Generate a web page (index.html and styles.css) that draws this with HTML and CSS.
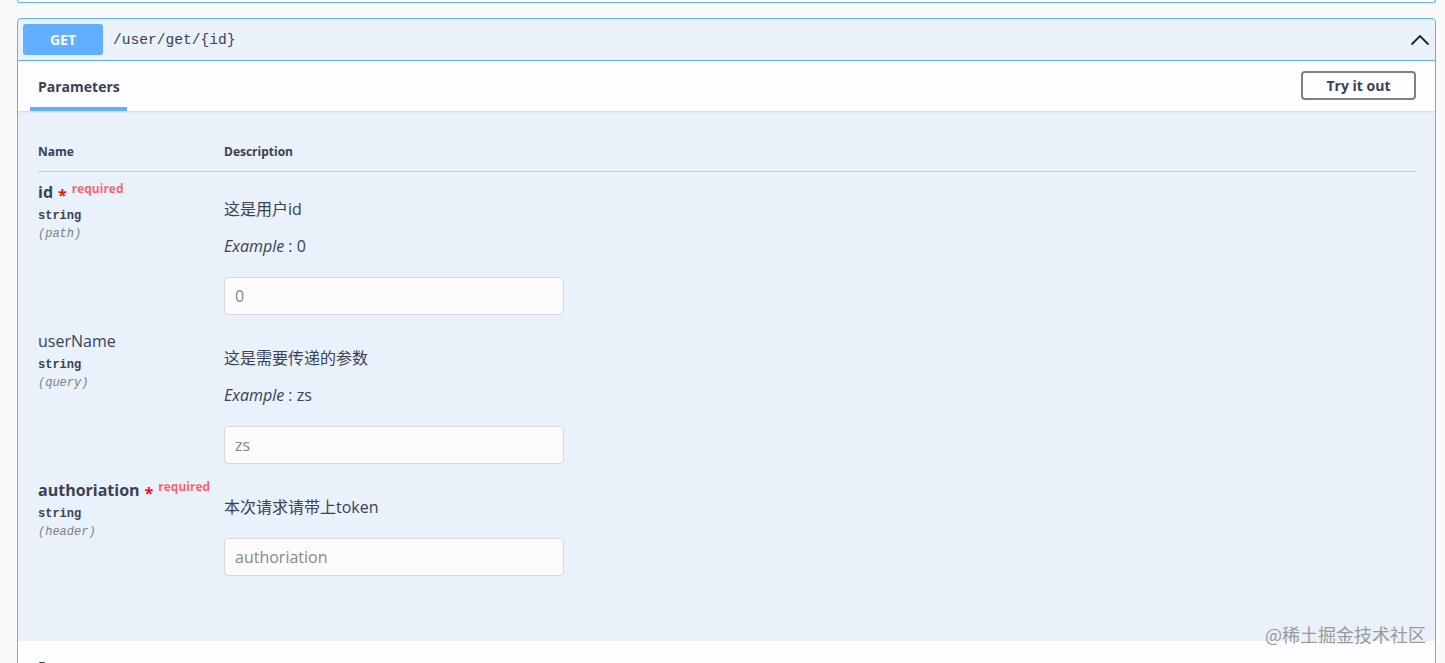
FILE: index.html
```html
<!DOCTYPE html>
<html lang="zh">
<head>
<meta charset="utf-8">
<title>Swagger</title>
<link rel="stylesheet" href="styles.css">
</head>
<body>
<div class="prev-block"></div>
<div class="opblock">
  <div class="summary">
    <span class="method">GET</span>
    <span class="path">/user/get/{id}</span>
    <svg class="chev" width="20" height="20" viewBox="0 0 20 20"><path d="M1.5 14.5 L10 6 L18.5 14.5" fill="none" stroke="#222" stroke-width="1.8"/></svg>
  </div>
  <div class="section-header">
    <div class="tab"><h4>Parameters</h4></div>
    <button class="try">Try it out</button>
  </div>
  <div class="params">
    <div class="thead"><div class="col-name">Name</div><div>Description</div></div>
    <div class="row">
      <div class="col-name">
        <div class="pname bold">id<span class="star">*</span><span class="req">required</span></div>
        <div class="ptype">string</div>
        <div class="pin">(path)</div>
      </div>
      <div class="col-desc">
        <p class="desc">这是用户id</p>
        <p class="example"><i>Example</i> : 0</p>
        <input class="field" type="text" placeholder="0">
      </div>
    </div>
    <div class="row">
      <div class="col-name">
        <div class="pname">userName</div>
        <div class="ptype">string</div>
        <div class="pin">(query)</div>
      </div>
      <div class="col-desc">
        <p class="desc">这是需要传递的参数</p>
        <p class="example"><i>Example</i> : zs</p>
        <input class="field" type="text" placeholder="zs">
      </div>
    </div>
    <div class="row">
      <div class="col-name">
        <div class="pname bold">authoriation<span class="star">*</span><span class="req">required</span></div>
        <div class="ptype">string</div>
        <div class="pin">(header)</div>
      </div>
      <div class="col-desc">
        <p class="desc last">本次请求请带上token</p>
        <input class="field" type="text" placeholder="authoriation">
      </div>
    </div>
  </div>
  <div class="responses"><h4>Responses</h4></div>
</div>
<div class="watermark">@稀土掘金技术社区</div>
</body>
</html>
```

FILE: styles.css
```css
* { box-sizing: border-box; }
html, body { margin: 0; padding: 0; }
body {
  background: #fafafa;
  font-family: "Open Sans", "Noto Sans CJK SC", sans-serif;
  color: #3b4151;
  position: relative;
  height: 663px;
  overflow: hidden;
}
.prev-block {
  height: 3px;
  margin: 0 9px 0 17px;
  border: 1px solid #61affe;
  border-top: none;
  border-radius: 0 0 4px 4px;
  background: #fff;
}
.opblock {
  margin: 15px 9px 0 17px;
  border: 1px solid #61affe;
  border-radius: 4px;
  background: rgba(97, 175, 254, 0.11);
}
.summary {
  display: flex;
  align-items: center;
  padding: 5px;
  border-bottom: 1px solid #61affe;
}
.method {
  width: 80px;
  height: 31px;
  border-radius: 3px;
  background: #61affe;
  color: #fff;
  font-weight: 700;
  font-size: 14px;
  display: flex;
  align-items: center;
  justify-content: center;
}
.path {
  margin-left: 10px;
  font-family: "Liberation Mono", monospace;
  font-size: 14.6px;
  color: #3b4151;
  flex: 1;
}
.section-header {
  display: flex;
  align-items: center;
  justify-content: space-between;
  min-height: 50px;
  padding: 0 19px 0 12px;
  background: rgba(255, 255, 255, 0.85);
  box-shadow: 0 1px 2px rgba(0, 0, 0, 0.1);
}
.tab {
  align-self: stretch;
  display: flex;
  align-items: center;
  padding: 4px 7px 0 8px;
  border-bottom: 4px solid #61affe;
}
.tab h4 {
  margin: 0;
  font-size: 14px;
  font-weight: 700;
  color: #3b4151;
}
.try {
  font-family: "Open Sans", sans-serif;
  font-size: 14px;
  font-weight: 700;
  color: #3b4151;
  background: transparent;
  border: 2px solid #808080;
  border-radius: 4px;
  height: 29px;
  width: 115px;
  padding: 0;
  margin-top: -1px;
}
.params {
  padding: 20px 19px 59px 20px;
}
.thead {
  display: flex;
  padding: 13px 0 11px;
  font-size: 12px;
  line-height: 16px;
  font-weight: 700;
  border-bottom: 1px solid rgba(59, 65, 81, 0.2);
}
.col-name { width: 186px; flex: none; }
.row {
  display: flex;
  padding: 1px 0 6px;
}
.row .col-name { padding-top: 9px; }
.col-desc { padding-top: 26px; }
.pname {
  font-size: 16px;
  line-height: 20px;
  height: 20px;
  white-space: nowrap;
}
.pname.bold { font-weight: 700; }
.star {
  color: #e81414;
  font-size: 16px;
  line-height: 0;
  margin-left: 5px;
  vertical-align: -3px;
}
.req {
  color: rgba(255, 0, 0, 0.6);
  font-size: 12px;
  line-height: 0;
  font-weight: 700;
  margin-left: 5px;
  vertical-align: 5px;
}
.ptype {
  margin-top: 6px;
  font-family: "Liberation Mono", monospace;
  font-size: 12px;
  line-height: 16px;
  font-weight: 700;
}
.pin {
  margin-top: 2px;
  font-family: "Liberation Mono", monospace;
  font-size: 12px;
  line-height: 16px;
  font-style: italic;
  color: #808080;
}
.desc, .example {
  margin: 0 0 17px;
  font-size: 16px;
  line-height: 20px;
}
.example, .desc.last { margin-bottom: 21px; }
.field {
  display: block;
  width: 340px;
  height: 38px;
  padding: 0 10px;
  border: 1px solid #d9d9d9;
  border-radius: 4px;
  background: #fbfbfb;
  font-family: "Open Sans", sans-serif;
  font-size: 16px;
  color: #3b4151;
  outline: none;
}
.field::placeholder { color: #888; }
.responses {
  background: rgba(255, 255, 255, 0.85);
  min-height: 50px;
  padding: 0 20px;
  display: flex;
  align-items: center;
}
.responses h4 { margin: 0; font-size: 14px; font-weight: 700; }
.watermark {
  position: absolute;
  left: 1265px;
  top: 624px;
  font-family: "Noto Sans CJK SC", sans-serif;
  font-size: 18px;
  line-height: 20px;
  color: #9a9a9a;
  white-space: nowrap;
}
```
